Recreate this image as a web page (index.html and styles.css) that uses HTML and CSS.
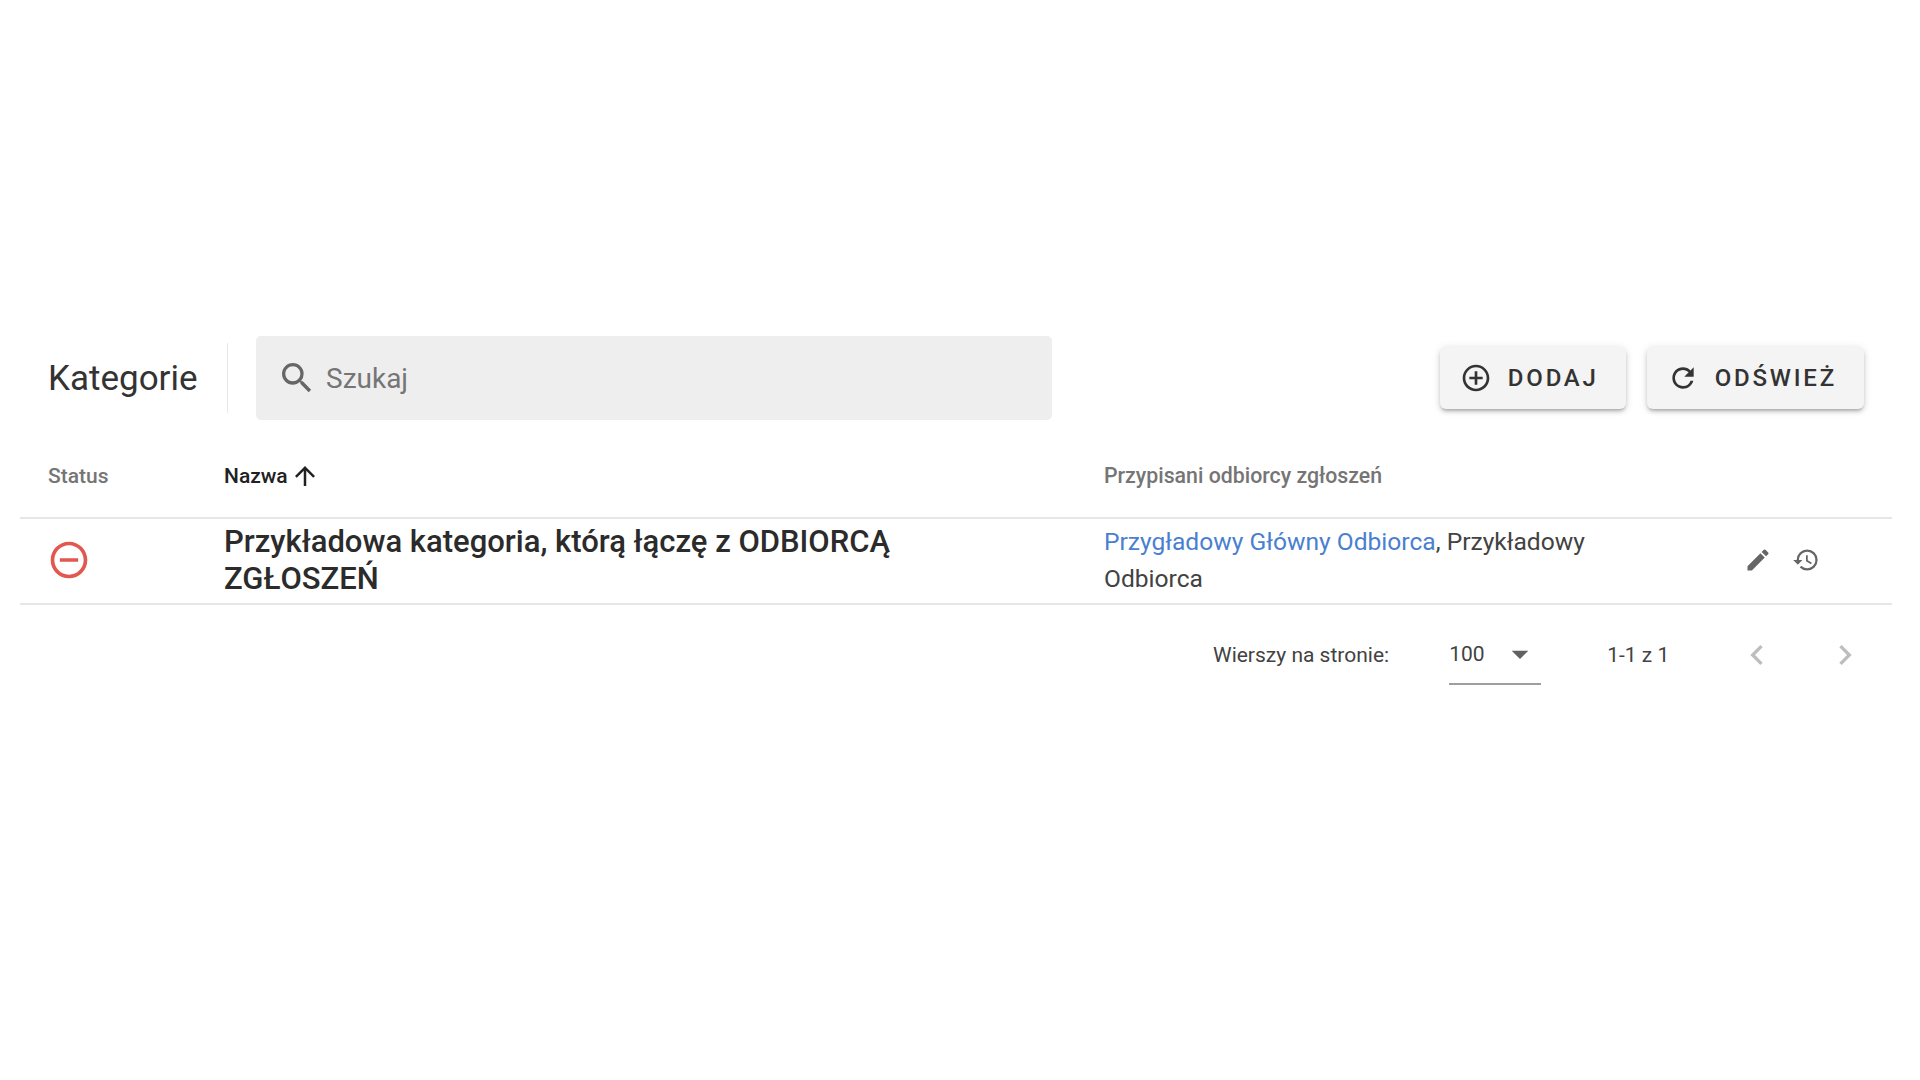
FILE: index.html
```html
<!DOCTYPE html>
<html lang="pl">
<head>
    <meta charset="UTF-8">
    <title>Kategorie</title>
    <link rel="stylesheet" href="styles.css">
</head>
<body>

<div class="panel">
    <div class="toolbar">
        <h1 class="title">Kategorie</h1>
        <div class="divider"></div>
        <div class="search">
            <svg class="search-icon" viewBox="0 0 24 24"><path d="M15.5 14h-.79l-.28-.27A6.47 6.47 0 0 0 16 9.5 6.5 6.5 0 1 0 9.5 16c1.61 0 3.09-.59 4.23-1.57l.27.28v.79l5 4.99L20.49 19l-4.99-5zm-6 0C7.01 14 5 11.99 5 9.5S7.01 5 9.5 5 14 7.01 14 9.5 11.99 14 9.5 14z"/></svg>
            <span class="search-text">Szukaj</span>
        </div>
        <div class="actions">
            <button class="btn">
                <svg viewBox="0 0 24 24"><path d="M13 7h-2v4H7v2h4v4h2v-4h4v-2h-4V7zm-1-5C6.48 2 2 6.48 2 12s4.48 10 10 10 10-4.48 10-10S17.52 2 12 2zm0 18c-4.41 0-8-3.59-8-8s3.59-8 8-8 8 3.59 8 8-3.59 8-8 8z"/></svg>
                DODAJ
            </button>
            <button class="btn">
                <svg viewBox="0 0 24 24"><path d="M17.65 6.35A7.958 7.958 0 0 0 12 4c-4.42 0-7.99 3.58-7.99 8s3.57 8 7.99 8c3.73 0 6.84-2.55 7.73-6h-2.08A5.99 5.99 0 0 1 12 18c-3.31 0-6-2.69-6-6s2.69-6 6-6c1.66 0 3.14.69 4.22 1.78L13 11h7V4l-2.35 2.35z"/></svg>
                ODŚWIEŻ
            </button>
        </div>
    </div>

    <div class="table">
        <div class="row head">
            <div class="col-status">Status</div>
            <div class="col-name sorted">
                Nazwa
                <svg viewBox="0 0 24 24"><path d="M4 12l1.41 1.41L11 7.83V20h2V7.83l5.58 5.59L20 12l-8-8-8 8z"/></svg>
            </div>
            <div class="col-people head-people">Przypisani odbiorcy zgłoszeń</div>
        </div>
        <div class="row item">
            <div class="col-status">
                <svg class="status-icon" viewBox="0 0 24 24"><path d="M7 11v2h10v-2H7zm5-9C6.48 2 2 6.48 2 12s4.48 10 10 10 10-4.48 10-10S17.52 2 12 2zm0 18c-4.41 0-8-3.59-8-8s3.59-8 8-8 8 3.59 8 8-3.59 8-8 8z"/></svg>
            </div>
            <div class="col-name item-name">Przykładowa kategoria, którą łączę z ODBIORCĄ ZGŁOSZEŃ</div>
            <div class="col-people item-people"><a class="link">Przygładowy Główny Odbiorca</a>, Przykładowy Odbiorca</div>
            <div class="col-tools">
                <svg viewBox="0 0 24 24"><path d="M3 17.25V21h3.75L17.81 9.94l-3.75-3.75L3 17.25zM20.71 7.04a1 1 0 0 0 0-1.41l-2.34-2.34a1 1 0 0 0-1.41 0l-1.83 1.83 3.75 3.75 1.83-1.83z"/></svg>
                <svg viewBox="0 0 24 24"><path d="M13 3a9 9 0 0 0-9 9H1l3.89 3.89.07.14L9 12H6c0-3.87 3.13-7 7-7s7 3.13 7 7-3.13 7-7 7c-1.93 0-3.68-.79-4.94-2.06l-1.42 1.42A8.954 8.954 0 0 0 13 21a9 9 0 0 0 0-18zm-1 5v5l4.28 2.54.72-1.21-3.5-2.08V8H12z"/></svg>
            </div>
        </div>
    </div>

    <div class="pager">
        <span class="pager-label">Wierszy na stronie:</span>
        <div class="pager-select">
            <span>100</span>
            <svg viewBox="0 0 24 24"><path d="M7 10l5 5 5-5z"/></svg>
        </div>
        <span class="pager-count">1-1 z 1</span>
        <svg class="pager-arrow prev" viewBox="0 0 24 24"><path d="M15.41 7.41L14 6l-6 6 6 6 1.41-1.41L10.83 12z"/></svg>
        <svg class="pager-arrow next" viewBox="0 0 24 24"><path d="M10 6L8.59 7.41 13.17 12l-4.58 4.59L10 18l6-6z"/></svg>
    </div>
</div>

</body>
</html>
```

FILE: styles.css
```css
body {
    margin: 0;
    background-color: #fff;
    font-family: 'Roboto', sans-serif;
    color: #212121;
}

.panel {
    padding: 336px 28px 0 20px;
}

/* Top bar */
.toolbar {
    display: flex;
    align-items: center;
    height: 84px;
    padding-left: 28px;
    padding-right: 28px;
}

.title {
    margin: 0;
    width: 151px;
    font-size: 35px;
    font-weight: 400;
    color: #333;
    white-space: nowrap;
}

.divider {
    width: 1px;
    height: 70px;
    margin-left: 28px;
    background-color: #e8e8e8;
}

.search {
    display: flex;
    align-items: center;
    width: 796px;
    height: 84px;
    margin-left: 28px;
    background-color: #eee;
    border-radius: 5px;
}

.search-icon {
    width: 40px;
    height: 40px;
    margin-left: 21px;
    fill: #666;
}

.search-text {
    margin-left: 9px;
    font-size: 28px;
    color: #757575;
}

.actions {
    display: flex;
    gap: 21px;
    margin-left: auto;
}

.btn {
    display: flex;
    align-items: center;
    height: 62px;
    padding: 0 27px 0 20px;
    border: none;
    border-radius: 6px;
    background-color: #f4f4f4;
    box-shadow: 0 3px 3px -2px rgba(0, 0, 0, 0.2), 0 3px 4px 0 rgba(0, 0, 0, 0.14), 0 1px 8px 0 rgba(0, 0, 0, 0.12);
    font-family: 'Roboto', sans-serif;
    font-size: 24px;
    font-weight: 500;
    letter-spacing: 2.8px;
    color: #333;
}

.btn svg {
    width: 32px;
    height: 32px;
    margin-right: 16px;
    fill: #333;
}

/* Table */
.row {
    display: flex;
    box-sizing: border-box;
    border-bottom: 2px solid #e6e6e6;
}

.head {
    align-items: center;
    height: 97px;
    margin-top: 2px;
    padding-top: 12px;
    font-size: 21px;
    font-weight: 500;
    color: #757575;
}

.item {
    align-items: center;
    height: 86px;
    padding-bottom: 2px;
}

.col-status {
    display: flex;
    width: 204px;
    padding-left: 28px;
    box-sizing: border-box;
}

.col-name {
    width: 880px;
}

.sorted {
    display: flex;
    align-items: center;
    gap: 2px;
    color: #212121;
}

.sorted svg {
    width: 30px;
    height: 30px;
    fill: #212121;
}

.col-people {
    width: 500px;
}

.head-people {
    font-size: 21.3px;
}

.status-icon {
    width: 44px;
    height: 44px;
    margin-left: -1px;
    fill: #e0584f;
}

.item-name {
    padding-right: 200px;
    box-sizing: border-box;
    font-size: 31px;
    font-weight: 500;
    line-height: 37px;
    color: #2b2b2b;
}

.item-people {
    font-size: 24.6px;
    line-height: 37px;
    color: #424242;
}

.link {
    color: #4a7fd0;
}

.col-tools {
    display: flex;
    gap: 20px;
    margin-left: 140px;
}

.col-tools svg {
    width: 28px;
    height: 28px;
    fill: #666;
}

/* Pager */
.pager {
    display: flex;
    align-items: center;
    height: 100px;
    font-size: 21px;
    color: #424242;
}

.pager-label {
    margin-left: 1193px;
}

.pager-select {
    display: flex;
    align-items: center;
    justify-content: space-between;
    width: 92px;
    height: 58px;
    margin-left: 60px;
    border-bottom: 2px solid #9e9e9e;
}

.pager-select svg {
    width: 40px;
    height: 40px;
    margin-right: 1px;
    fill: #616161;
}

.pager-count {
    margin-left: 66px;
}

.pager-arrow {
    width: 40px;
    height: 40px;
    fill: #bdbdbd;
}

.prev {
    margin-left: 68px;
}

.next {
    margin-left: 48px;
}
```
